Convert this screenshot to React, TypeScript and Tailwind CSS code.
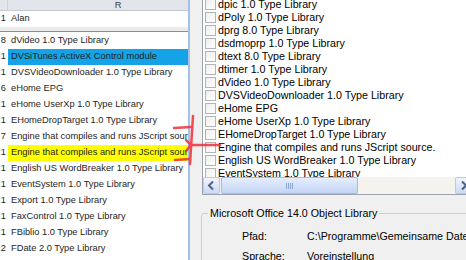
import React from "react";

const leftRows: [string, string, string][] = [
  ["8", "dVideo 1.0 Type Library", ""],
  ["1", "DVSiTunes ActiveX Control module", "blue"],
  ["1", "DVSVideoDownloader 1.0 Type Library", ""],
  ["6", "eHome EPG", ""],
  ["1", "eHome UserXp 1.0 Type Library", ""],
  ["1", "EHomeDropTarget 1.0 Type Library", ""],
  ["7", "Engine that compiles and runs JScript source.", ""],
  ["1", "Engine that compiles and runs JScript source.", "yellow"],
  ["1", "English US WordBreaker 1.0 Type Library", ""],
  ["1", "EventSystem 1.0 Type Library", ""],
  ["1", "Export 1.0 Type Library", ""],
  ["1", "FaxControl 1.0 Type Library", ""],
  ["1", "FBiblio 1.0 Type Library", ""],
  ["2", "FDate 2.0 Type Library", ""],
];

const rightItems = [
  "dpic 1.0 Type Library",
  "dPoly 1.0 Type Library",
  "dprg 8.0 Type Library",
  "dsdmoprp 1.0 Type Library",
  "dtext 8.0 Type Library",
  "dtimer 1.0 Type Library",
  "dVideo 1.0 Type Library",
  "DVSVideoDownloader 1.0 Type Library",
  "eHome EPG",
  "eHome UserXp 1.0 Type Library",
  "EHomeDropTarget 1.0 Type Library",
  "Engine that compiles and runs JScript source.",
  "English US WordBreaker 1.0 Type Library",
  "EventSystem 1.0 Type Library",
];

function Chevron({ dir }: { dir: "left" | "right" }) {
  return (
    <svg width="15" height="15" viewBox="0 0 15 15">
      {dir === "left" ? (
        <polyline points="9,3.5 5,7.5 9,11.5" fill="none" stroke="#4d6185" strokeWidth="2" />
      ) : (
        <polyline points="6,3.5 10,7.5 6,11.5" fill="none" stroke="#4d6185" strokeWidth="2" />
      )}
    </svg>
  );
}

export default function App() {
  return (
    <div className="relative flex w-[466px] h-[260px] overflow-hidden bg-[#f0f0f0]">
      {/* Excel pane */}
      <div className="w-[188px] shrink-0 flex flex-col overflow-hidden bg-white font-['Liberation_Sans',Arial,sans-serif] text-[9.3px] text-[#1e1e1e]">
        <div className="h-[11px] shrink-0 flex border-b border-[#c5cad1] bg-[#e2e6ec]">
          <div className="w-[8px] shrink-0 border-r border-[#d0d5db]" />
          <div className="w-[220px] shrink-0 text-center leading-[10px] text-[#3a3a3a]">R</div>
        </div>
        <div className="h-[16px] shrink-0 flex items-center">
          <div className="w-[8px] shrink-0 text-right pr-[2px]">1</div>
          <div className="flex-1 pl-[3px] whitespace-nowrap">Alan</div>
        </div>
        <div className="h-[5px] shrink-0 bg-[#ebebeb] border-b border-[#8d8d8d]" />
        <div className="h-[1px] shrink-0" />
        {leftRows.map(([n, t, hl], i) => (
          <div key={i} className="h-[16px] shrink-0 flex items-stretch">
            <div className="w-[8px] shrink-0 text-right pr-[2px] flex items-center justify-end">{n}</div>
            <div
              className={
                "flex-1 pl-[3px] whitespace-nowrap overflow-hidden flex items-center " +
                (hl === "blue" ? "bg-[#14a3e6]" : hl === "yellow" ? "bg-[#ffff00]" : "")
              }
            >
              {t}
            </div>
          </div>
        ))}
      </div>
      <div className="w-[2px] shrink-0 bg-[#a4c2e8]" />

      {/* Dialog pane */}
      <div className="flex-1 overflow-hidden flex flex-col font-['Liberation_Sans',Arial,sans-serif] text-[10.7px] text-black">
        <div className="ml-[12px] w-[272px] h-[195px] shrink-0 flex flex-col border-l border-b border-[#9aa3ad] bg-white">
          <div className="h-[177px] shrink-0 overflow-hidden">
            <div className="mt-[-2px] pl-[2px]">
              {rightItems.map((t, i) => (
                <div key={i} className="h-[13px] flex items-center gap-[2px] whitespace-nowrap">
                  <div className="w-[11px] h-[11px] shrink-0 border border-[#b4b4b4] bg-linear-to-br from-[#eeeeee] to-white" />
                  <span className="leading-[13px]">{t}</span>
                </div>
              ))}
            </div>
          </div>
          <div className="h-[17px] shrink-0 flex bg-[#f4f3ee]">
            <div className="w-[17px] h-[17px] shrink-0 rounded-[2px] border border-[#b9c9ea] bg-linear-to-b from-[#f1f5fe] to-[#ccdaf6] flex items-center justify-center">
              <Chevron dir="left" />
            </div>
            <div className="w-[235px] shrink-0 flex items-stretch">
              <div className="ml-[1px] w-[137px] rounded-[2px] border border-[#a5bbe3] bg-linear-to-b from-[#e6eefd] to-[#c3d4f5] flex items-center justify-center gap-[1px]">
                <div className="w-[1px] h-[6px] bg-[#8ea6d6]" />
                <div className="w-[1px] h-[6px] bg-[#8ea6d6]" />
                <div className="w-[1px] h-[6px] bg-[#8ea6d6]" />
                <div className="w-[1px] h-[6px] bg-[#8ea6d6]" />
              </div>
            </div>
            <div className="w-[17px] h-[17px] shrink-0 rounded-[2px] border border-[#b9c9ea] bg-linear-to-b from-[#f1f5fe] to-[#ccdaf6] flex items-center justify-center">
              <Chevron dir="right" />
            </div>
          </div>
        </div>

        <fieldset className="ml-[11px] mt-[12px] w-[300px] h-[80px] shrink-0 border border-[#d0d0bf] rounded-[3px]">
          <legend className="ml-[6px] px-[2px] leading-[13px] whitespace-nowrap">Microsoft Office 14.0 Object Library</legend>
          <div className="pt-[6px] pl-[40px]">
            <div className="h-[20px] flex items-center whitespace-nowrap">
              <div className="w-[65px] shrink-0">Pfad:</div>
              <div>{"C:\\Programme\\Gemeinsame Dateien\\Microsoft Shared\\OFFICE14\\MSO.DLL"}</div>
            </div>
            <div className="h-[20px] flex items-center whitespace-nowrap">
              <div className="w-[65px] shrink-0">Sprache:</div>
              <div>Voreinstellung</div>
            </div>
          </div>
        </fieldset>
      </div>

      {/* red annotation */}
      <svg className="absolute inset-0 pointer-events-none" width="466" height="260" viewBox="0 0 466 260">
        <g stroke="#f2303c" strokeWidth="2.5" strokeLinecap="round" fill="none" opacity="0.85">
          <path d="M174 128 L191 127" />
          <path d="M193 116 L190 164" />
          <path d="M175 160 L190 159" />
          <path d="M190 145 L220 145" />
          <path d="M186 140 L191 145 L186 151" />
        </g>
      </svg>
    </div>
  );
}
